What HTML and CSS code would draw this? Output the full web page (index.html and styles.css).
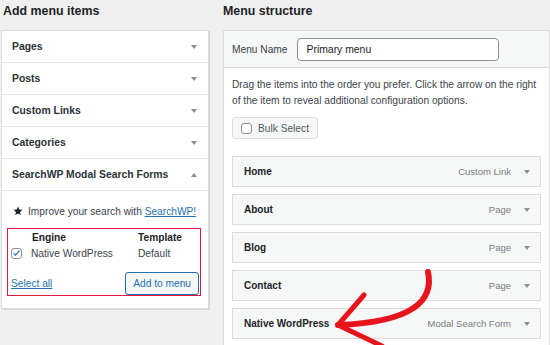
FILE: index.html
```html
<!DOCTYPE html>
<html lang="en">

<head>
    <meta charset="UTF-8">
    <link rel="stylesheet" href="styles.css">
    <title>Menus</title>
</head>

<body>
    <div class="page">
        <section class="col col-left">
            <h2 class="col-title">Add menu items</h2>
            <div class="accordion">
                <div class="acc-row"><span>Pages</span><i class="caret"></i></div>
                <div class="acc-row"><span>Posts</span><i class="caret"></i></div>
                <div class="acc-row"><span>Custom Links</span><i class="caret"></i></div>
                <div class="acc-row"><span>Categories</span><i class="caret"></i></div>
                <div class="acc-row"><span>SearchWP Modal Search Forms</span><i class="caret up"></i></div>
                <div class="acc-body">
                    <p class="promo">
                        <svg class="star" viewBox="0 0 20 20" width="10" height="10">
                            <path d="M10 1l2.6 6.1 6.4.5-4.9 4.2 1.5 6.4L10 14.8 4.4 18.2l1.5-6.4L1 7.6l6.4-.5z" fill="#1d2327" />
                        </svg>
                        <span>Improve your search with <a href="#">SearchWP!</a></span>
                    </p>
                    <div class="highlight">
                        <div class="engine-table">
                            <span></span>
                            <b>Engine</b>
                            <b>Template</b>
                            <span class="cb checked">
                                <svg viewBox="0 0 12 12" width="10" height="10">
                                    <path d="M2 6.2l2.6 2.6L10 2.8" fill="none" stroke="#2271b1" stroke-width="1.6" />
                                </svg>
                            </span>
                            <span>Native WordPress</span>
                            <span>Default</span>
                        </div>
                        <div class="highlight-foot">
                            <a href="#">Select all</a>
                            <button class="btn-secondary">Add to menu</button>
                        </div>
                    </div>
                </div>
            </div>
        </section>

        <section class="col col-right">
            <h2 class="col-title">Menu structure</h2>
            <div class="menu-box">
                <div class="menu-head">
                    <label for="menu-name">Menu Name</label>
                    <input type="text" id="menu-name" value="Primary menu">
                </div>
                <div class="menu-body">
                    <p class="hint">Drag the items into the order you prefer. Click the arrow on the right<br>of the
                        item to reveal additional configuration options.</p>
                    <button class="bulk"><span class="cb"></span>Bulk Select</button>
                    <ul class="items">
                        <li><b>Home</b><span class="type">Custom Link</span><i class="caret"></i></li>
                        <li><b>About</b><span class="type">Page</span><i class="caret"></i></li>
                        <li><b>Blog</b><span class="type">Page</span><i class="caret"></i></li>
                        <li><b>Contact</b><span class="type">Page</span><i class="caret"></i></li>
                        <li><b>Native WordPress</b><span class="type">Modal Search Form</span><i class="caret"></i></li>
                    </ul>
                </div>
            </div>
        </section>

        <!-- hand drawn pointer on top of the screenshot -->
        <svg class="annotation" viewBox="0 0 550 345" width="550" height="345">
            <g fill="none" stroke="#e8141c" stroke-linecap="round" stroke-linejoin="round">
                <path d="M428 272 C434 300 414 322 338 325" stroke-width="6" />
                <path d="M338 325 L364 295" stroke-width="5" />
                <path d="M338 325 L382 346" stroke-width="5" />
            </g>
        </svg>
    </div>
</body>

</html>
```

FILE: styles.css
```css
body {
    margin: 0;
    background: #f0f0f1;
    font-family: "Liberation Sans", Arial, sans-serif;
    color: #1d2327;
    font-size: 10.2px;
}

.page {
    position: relative;
    display: flex;
    gap: 14px;
    padding-left: 1px;
    height: 345px;
    overflow: hidden;
}

.col-title {
    margin: 0;
    height: 30px;
    line-height: 22px;
    font-size: 12.4px;
    font-weight: bold;
}

.col-left {
    width: 208px;
    flex-shrink: 0;
}

.col-left .col-title {
    padding-left: 2px;
}

.col-right {
    flex: 1;
}

/* left accordion */
.accordion {
    background: #fff;
    border: 1px solid #dcdcde;
    box-shadow: 1px 1px 0 #d5d5d7;
}

.acc-row {
    display: flex;
    align-items: center;
    justify-content: space-between;
    height: 31px;
    padding: 0 11px 0 10px;
    border-bottom: 1px solid #e6e6e8;
    font-size: 10.4px;
    font-weight: bold;
    color: #2c3338;
}

.caret {
    width: 0;
    height: 0;
    border-left: 3px solid transparent;
    border-right: 3px solid transparent;
    border-top: 4px solid #8c8f94;
}

.caret.up {
    border-top: none;
    border-bottom: 4px solid #8c8f94;
}

.acc-body {
    padding: 12px 7px 12px 5px;
}

.promo {
    display: flex;
    align-items: center;
    gap: 5px;
    height: 16px;
    margin: 0 0 9px 0;
    padding-left: 6px;
    color: #3c434a;
}

.promo a,
.highlight-foot a {
    color: #2271b1;
}

.highlight {
    border: 1px solid #e2183d;
    padding: 0 1px 0 0;
}

.engine-table {
    display: grid;
    grid-template-columns: 23px 107px auto;
    grid-auto-rows: 16px;
    align-items: center;
    color: #3c434a;
}

.engine-table b {
    color: #1d2327;
}

.engine-table b:nth-child(2) {
    padding-left: 1px;
}

.cb {
    display: inline-flex;
    align-items: center;
    justify-content: center;
    box-sizing: border-box;
    width: 11px;
    height: 11px;
    border: 1px solid #8c8f94;
    border-radius: 3px;
    background: #fff;
}

.engine-table .cb {
    margin-left: 3px;
}

.highlight-foot {
    display: flex;
    align-items: center;
    justify-content: space-between;
    margin-top: 11px;
    padding-left: 3px;
    height: 23px;
}

.btn-secondary {
    height: 23px;
    padding: 0 7px;
    border: 1px solid #2271b1;
    border-radius: 3px;
    background: #f6f7f7;
    color: #2271b1;
    font-family: inherit;
    font-size: 10.2px;
}

/* right column */
.menu-box {
    background: #fff;
    border: 1px solid #dcdcde;
    height: 400px;
}

.menu-head {
    display: flex;
    align-items: center;
    gap: 9px;
    height: 36px;
    padding-left: 8px;
    background: #f6f7f7;
    border-bottom: 1px solid #dcdcde;
    color: #3c434a;
}

.menu-head input {
    box-sizing: border-box;
    width: 202px;
    height: 23px;
    padding: 0 9px;
    border: 1px solid #8c8f94;
    border-radius: 4px;
    font-family: inherit;
    font-size: 10.4px;
    color: #1d2327;
}

.menu-body {
    padding: 9px 8px 0 8px;
}

.hint {
    margin: 0 0 8px 0;
    line-height: 16px;
    color: #3c434a;
}

.bulk {
    display: flex;
    align-items: center;
    gap: 6px;
    height: 22px;
    padding: 0 8px;
    border: 1px solid #dcdcde;
    border-radius: 3px;
    background: #f6f7f7;
    color: #50575e;
    font-family: inherit;
    font-size: 10.2px;
}

.items {
    list-style: none;
    margin: 17px 0 0 0;
    padding: 0;
    display: flex;
    flex-direction: column;
    gap: 7px;
}

.items li {
    display: flex;
    align-items: center;
    height: 29px;
    padding: 0 10px 0 11px;
    border: 1px solid #dcdcde;
    background: #f6f7f7;
}

.items b {
    flex: 1;
    font-size: 10px;
}

.items .type {
    margin-right: 13px;
    color: #787c82;
    font-size: 9.5px;
}

.annotation {
    position: absolute;
    top: 0;
    left: 0;
    pointer-events: none;
}
```
